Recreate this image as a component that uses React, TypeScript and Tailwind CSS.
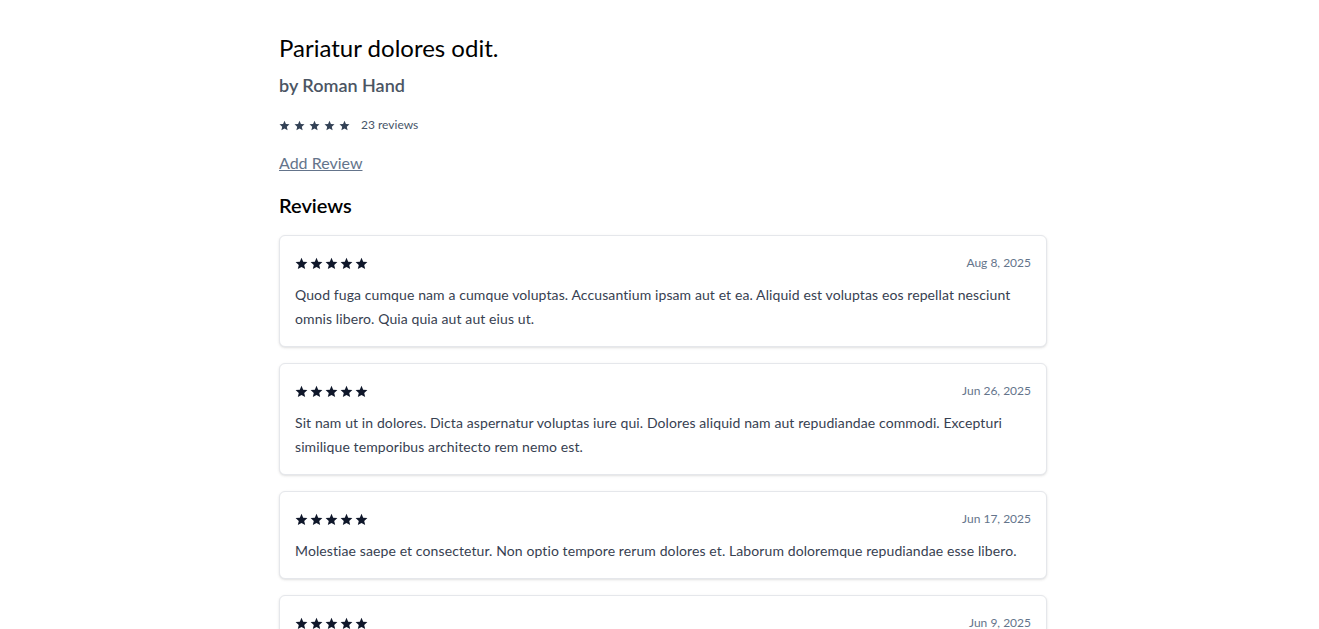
const reviews = [
  {
    date: 'Aug 8, 2025',
    body: 'Quod fuga cumque nam a cumque voluptas. Accusantium ipsam aut et ea. Aliquid est voluptas eos repellat nesciunt omnis libero. Quia quia aut aut eius ut.',
  },
  {
    date: 'Jun 26, 2025',
    body: 'Sit nam ut in dolores. Dicta aspernatur voluptas iure qui. Dolores aliquid nam aut repudiandae commodi. Excepturi similique temporibus architecto rem nemo est.',
  },
  {
    date: 'Jun 17, 2025',
    body: 'Molestiae saepe et consectetur. Non optio tempore rerum dolores et. Laborum doloremque repudiandae esse libero.',
  },
  {
    date: 'Jun 9, 2025',
    body: 'Voluptatem est et qui. Ut quia dolorem ipsa. Aut odit quaerat eum sunt.',
  },
];

function Star({ className }: { className: string }) {
  return (
    <svg viewBox="0 0 24 24" className={className} aria-hidden="true">
      <path
        fill="currentColor"
        d="M12 1.5l3.1 7.2 7.8.7-5.9 5.2 1.8 7.7L12 18.3l-6.8 4 1.8-7.7-5.9-5.2 7.8-.7z"
      />
    </svg>
  );
}

function Stars({ size, gap, color }: { size: string; gap: string; color: string }) {
  return (
    <div className={`flex items-center ${gap} ${color}`}>
      {[0, 1, 2, 3, 4].map((i) => (
        <Star key={i} className={size} />
      ))}
    </div>
  );
}

export default function App() {
  return (
    <div className="min-h-screen bg-white pl-[7px] font-['Lato',sans-serif]">
      <div className="mx-auto w-[768px] pt-8 pb-10">
        <h1 className="text-2xl leading-8 text-black">Pariatur dolores odit.</h1>
        <p className="mt-[7px] text-lg font-semibold leading-7 text-[#4b5563]">by Roman Hand</p>

        <div className="mt-[18px] flex h-4 items-center">
          <Stars size="h-[11px] w-[11px]" gap="gap-[4px]" color="text-[#334155]" />
          <span className="ml-[11px] text-xs text-[#475569]">23 reviews</span>
        </div>

        <a href="#" className="mt-[18px] inline-block text-base leading-6 text-[#64748b] underline">
          Add Review
        </a>

        <h2 className="mt-4 text-xl font-semibold leading-7 text-black">Reviews</h2>

        <div className="mt-4 flex flex-col gap-4">
          {reviews.map((r) => (
            <div key={r.date} className="rounded-md border border-[#e5e7eb] bg-white px-[15px] pt-[15px] pb-[15px] shadow-sm">
              <div className="flex h-6 items-center justify-between">
                <Stars size="h-[13px] w-[13px]" gap="gap-[2px]" color="text-[#0f172a]" />
                <span className="text-xs text-[#64748b]">{r.date}</span>
              </div>
              <p className="mt-2 text-sm leading-6 tracking-[0.1px] text-[#374151]">{r.body}</p>
            </div>
          ))}
        </div>
      </div>
    </div>
  );
}
